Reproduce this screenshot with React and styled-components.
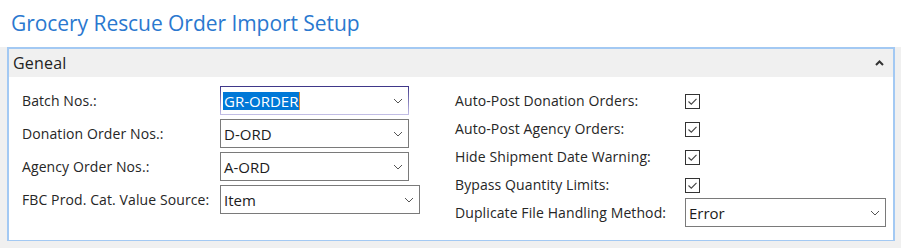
import styled, { createGlobalStyle } from 'styled-components';

const GlobalStyle = createGlobalStyle`
  body {
    margin: 0;
    background: #ffffff;
    font-family: "Open Sans", "Noto Sans", sans-serif;
    color: #212121;
  }
`;

const Page = styled.div`
  width: 901px;
  height: 248px;
  background: #f0f0f0;
  display: flex;
  flex-direction: column;
`;

const TitleBar = styled.div`
  background: #ffffff;
  height: 47px;
  box-sizing: border-box;
  padding: 9px 0 0 11px;
`;

const Title = styled.h1`
  margin: 0;
  font-size: 21px;
  font-weight: 400;
  line-height: 28px;
  color: #2a78cf;
  letter-spacing: -0.05px;
`;

const Panel = styled.section`
  margin: 0 6px 0 7px;
  border: 2px solid #a3c9f3;
  border-bottom-width: 1px;
  background: #ffffff;
`;

const PanelHeader = styled.div`
  height: 28px;
  background: #f0f0f0;
  display: flex;
  align-items: center;
  justify-content: space-between;
  padding: 0 9px 0 4px;
  font-size: 16px;
  letter-spacing: 0.2px;
  color: #222;
`;

const PanelBody = styled.div`
  display: flex;
  padding: 9px 7px 13px 13px;
`;

const Column = styled.div`
  width: ${p => p.$width || 'auto'};
  flex: ${p => (p.$width ? 'none' : '1')};
  display: flex;
  flex-direction: column;
  gap: ${p => p.$gap || 0}px;
`;

const Row = styled.div`
  display: flex;
  align-items: center;
  height: ${p => p.$height}px;
`;

const Label = styled.span`
  width: ${p => p.$width}px;
  flex: none;
  font-size: 14px;
  letter-spacing: 0.1px;
  white-space: nowrap;
  color: #262626;
`;

const SelectBox = styled.div`
  width: ${p => p.$width}px;
  height: 29px;
  box-sizing: border-box;
  border: 1px solid #7a7a7a;
  ${p => p.$focused && `
    border-image: linear-gradient(#3d3588, #c4c0e6) 1;
  `}
  display: flex;
  align-items: center;
  justify-content: space-between;
  padding: 0 5px 0 2px;
  font-size: 15px;
  color: #1c1c1c;
  background: #ffffff;
`;

const Value = styled.span`
  padding: 0 1px;
  line-height: 18px;
  ${p => p.$selected && `
    background: #0078d7;
    color: #ffffff;
    border-right: 1px solid #e58a2b;
  `}
`;

const CheckBox = styled.span`
  width: 15px;
  height: 15px;
  box-sizing: border-box;
  border: 1px solid #333;
  display: flex;
  align-items: center;
  justify-content: center;
  margin-top: 3px;
  background: #fff;
`;

const Chevron = () => (
  <svg width="10" height="6" viewBox="0 0 10 6">
    <path d="M1 1 L5 5 L9 1" fill="none" stroke="#555" strokeWidth="1" />
  </svg>
);

const Caret = () => (
  <svg width="9" height="6" viewBox="0 0 9 6">
    <path d="M1 5 L4.5 1.5 L8 5" fill="none" stroke="#333" strokeWidth="2" />
  </svg>
);

const Check = () => (
  <svg width="13" height="13" viewBox="0 0 13 13">
    <path d="M2.5 6.5 L5.3 9.2 L10.5 3.8" fill="none" stroke="#444" strokeWidth="1.1" />
  </svg>
);

const Select = ({ value, width, focused }) => (
  <SelectBox $width={width} $focused={focused}>
    <Value $selected={focused}>{value}</Value>
    <Chevron />
  </SelectBox>
);

const leftFields = [
  { label: 'Batch Nos.:', value: 'GR-ORDER', width: 189, focused: true },
  { label: 'Donation Order Nos.:', value: 'D-ORD', width: 189 },
  { label: 'Agency Order Nos.:', value: 'A-ORD', width: 189 },
  { label: 'FBC Prod. Cat. Value Source:', value: 'Item', width: 200 },
];

const checks = [
  'Auto-Post Donation Orders:',
  'Auto-Post Agency Orders:',
  'Hide Shipment Date Warning:',
  'Bypass Quantity Limits:',
];

export default function App() {
  return (
    <Page>
      <GlobalStyle />
      <TitleBar>
        <Title>Grocery Rescue Order Import Setup</Title>
      </TitleBar>
      <Panel>
        <PanelHeader>
          <span>Geneal</span>
          <Caret />
        </PanelHeader>
        <PanelBody>
          <Column $width="433px" $gap={4}>
            {leftFields.map(f => (
              <Row key={f.label} $height={29}>
                <Label $width={198}>{f.label}</Label>
                <Select value={f.value} width={f.width} focused={f.focused} />
              </Row>
            ))}
          </Column>
          <Column>
            {checks.map(c => (
              <Row key={c} $height={28}>
                <Label $width={230}>{c}</Label>
                <CheckBox><Check /></CheckBox>
              </Row>
            ))}
            <Row $height={29}>
              <Label $width={230}>Duplicate File Handling Method:</Label>
              <Select value="Error" width={201} />
            </Row>
          </Column>
        </PanelBody>
      </Panel>
    </Page>
  );
}
